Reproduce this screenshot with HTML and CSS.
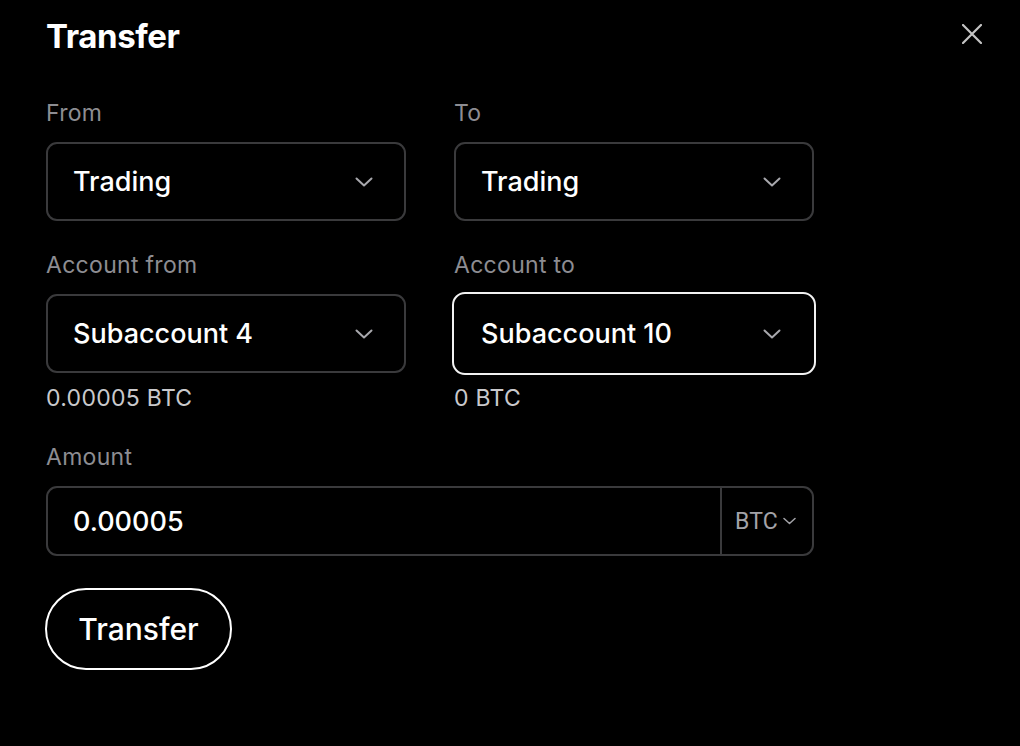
FILE: index.html
```html
<!DOCTYPE html>
<html lang="en">
<head>
  <meta charset="UTF-8" />
  <meta name="viewport" content="width=device-width, initial-scale=1.0" />
  <title>Transfer</title>
  <link rel="stylesheet" href="styles.css">
</head>
<body>
  <div class="modal">
    <div class="modal-head">
      <h1>Transfer</h1>
      <button class="close" aria-label="Close">
        <svg width="20" height="20" viewBox="0 0 20 20"><path d="M1 1L19 19M19 1L1 19" stroke="currentColor" stroke-width="2.2" stroke-linecap="round"/></svg>
      </button>
    </div>

    <div class="form-grid">
      <div class="field">
        <label>From</label>
        <div class="select">
          <span>Trading</span>
          <svg class="chev" width="18" height="10" viewBox="0 0 18 10"><path d="M1.5 1.5L9 8.5L16.5 1.5" fill="none" stroke="currentColor" stroke-width="2" stroke-linecap="round" stroke-linejoin="round"/></svg>
        </div>
      </div>
      <div class="field">
        <label>To</label>
        <div class="select">
          <span>Trading</span>
          <svg class="chev" width="18" height="10" viewBox="0 0 18 10"><path d="M1.5 1.5L9 8.5L16.5 1.5" fill="none" stroke="currentColor" stroke-width="2" stroke-linecap="round" stroke-linejoin="round"/></svg>
        </div>
      </div>

      <div class="field">
        <label>Account from</label>
        <div class="select">
          <span>Subaccount 4</span>
          <svg class="chev" width="18" height="10" viewBox="0 0 18 10"><path d="M1.5 1.5L9 8.5L16.5 1.5" fill="none" stroke="currentColor" stroke-width="2" stroke-linecap="round" stroke-linejoin="round"/></svg>
        </div>
        <div class="balance">0.00005 BTC</div>
      </div>
      <div class="field">
        <label>Account to</label>
        <div class="select focused">
          <span>Subaccount 10</span>
          <svg class="chev" width="18" height="10" viewBox="0 0 18 10"><path d="M1.5 1.5L9 8.5L16.5 1.5" fill="none" stroke="currentColor" stroke-width="2" stroke-linecap="round" stroke-linejoin="round"/></svg>
        </div>
        <div class="balance">0 BTC</div>
      </div>

      <div class="field wide">
        <label>Amount</label>
        <div class="amount">
          <span class="amount-value">0.00005</span>
          <div class="currency">
            <span>BTC</span>
            <svg width="13" height="8" viewBox="0 0 13 8"><path d="M1 1.5L6.5 6.5L12 1.5" fill="none" stroke="currentColor" stroke-width="1.5" stroke-linecap="round" stroke-linejoin="round"/></svg>
          </div>
        </div>
      </div>
    </div>

    <button class="submit">Transfer</button>
  </div>
</body>
</html>
```

FILE: styles.css
```css
body {
  margin: 0;
  padding: 0;
  background: #000;
  color: #fff;
  font-family: Inter, "Noto Sans", sans-serif;
}

.modal {
  width: 1020px;
  height: 746px;
  padding: 16px 0 0 46px;
  box-sizing: border-box;
}

.modal-head {
  display: flex;
  justify-content: space-between;
  align-items: flex-start;
  width: 936px;
}

.modal-head h1 {
  margin: 0;
  font-size: 33px;
  line-height: 40px;
  font-weight: 700;
  letter-spacing: -0.4px;
}

.close {
  background: none;
  border: none;
  padding: 0;
  margin-top: 8px;
  color: #c4c4c4;
  cursor: pointer;
}

.form-grid {
  display: grid;
  grid-template-columns: 360px 360px;
  column-gap: 48px;
  row-gap: 31px;
  margin-top: 44px;
}

.field {
  display: flex;
  flex-direction: column;
}

.field.wide {
  grid-column: 1 / 3;
  margin-top: 2px;
}

.field label {
  font-size: 23px;
  line-height: 26px;
  letter-spacing: 0.3px;
  color: #8d8d92;
  margin-bottom: 16px;
}

.select {
  height: 79px;
  box-sizing: border-box;
  border: 2px solid #3a3a3c;
  border-radius: 11px;
  display: flex;
  align-items: center;
  justify-content: space-between;
  padding: 0 31px 0 25px;
  font-size: 27px;
  font-weight: 500;
}

.select.focused {
  border-color: #000;
  outline: 2px solid #f2f2f2;
  outline-offset: 0;
}

.chev {
  color: #a8a8ad;
}

.balance {
  margin-top: 12px;
  font-size: 23px;
  line-height: 26px;
  letter-spacing: 0.3px;
  color: #c9c9cc;
}

.amount {
  height: 70px;
  box-sizing: border-box;
  border: 2px solid #3a3a3c;
  border-radius: 11px;
  display: flex;
  align-items: stretch;
}

.amount-value {
  flex: 1;
  display: flex;
  align-items: center;
  padding-left: 25px;
  font-size: 27px;
  font-weight: 500;
}

.currency {
  width: 92px;
  border-left: 2px solid #3a3a3c;
  display: flex;
  align-items: center;
  gap: 5px;
  padding-left: 13px;
  box-sizing: border-box;
  color: #a3a3a8;
  font-family: Roboto, sans-serif;
  font-size: 23px;
  letter-spacing: 0.2px;
}

.submit {
  margin-top: 32px;
  margin-left: -1px;
  width: 187px;
  height: 82px;
  background: #000;
  color: #fff;
  border: 2px solid #fff;
  border-radius: 41px;
  font-family: Inter, "Noto Sans", sans-serif;
  font-size: 30px;
  font-weight: 500;
  cursor: pointer;
}
```
